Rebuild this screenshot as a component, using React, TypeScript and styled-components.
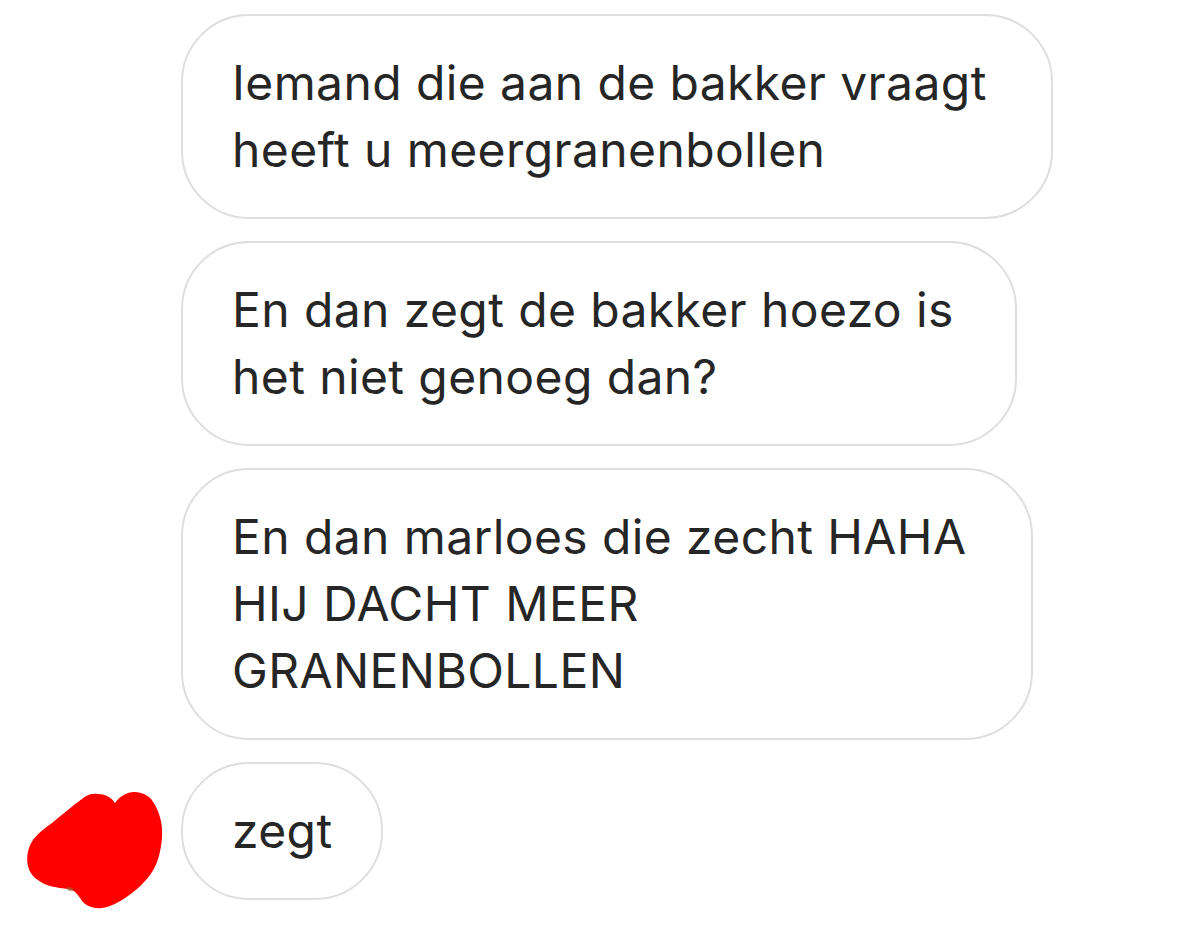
import React from "react";
import styled, { createGlobalStyle } from "styled-components";

const GlobalStyle = createGlobalStyle`
  html, body {
    margin: 0;
    padding: 0;
    background: #ffffff;
  }
  body {
    font-family: Inter, "Noto Sans", "Liberation Sans", sans-serif;
    -webkit-font-smoothing: antialiased;
  }
`;

const Thread = styled.div`
  display: flex;
  flex-direction: column;
  gap: 22px;
  padding-top: 14px;
  width: 1200px;
  height: 927px;
  box-sizing: border-box;
  overflow: hidden;
`;

const Row = styled.div`
  display: flex;
  align-items: flex-end;
`;

const AvatarSlot = styled.div`
  width: 181px;
  flex-shrink: 0;
  align-self: stretch;
  position: relative;
`;

const Scribble = styled.svg`
  position: absolute;
  left: 0;
  bottom: 0;
  overflow: visible;
`;

const Bubble = styled.div<{ $w: number }>`
  box-sizing: border-box;
  width: ${(p) => p.$w}px;
  border: 2px solid #dedede;
  border-radius: 68px;
  padding: 33px 20px 34px 49px;
  font-size: 48px;
  line-height: 67px;
  color: #262626;
  font-weight: 400;
  letter-spacing: 0.4px;
  white-space: nowrap;
`;

const messages: { w: number; lines: string[] }[] = [
  { w: 872, lines: ["Iemand die aan de bakker vraagt", "heeft u meergranenbollen"] },
  { w: 836, lines: ["En dan zegt de bakker hoezo is", "het niet genoeg dan?"] },
  { w: 852, lines: ["En dan marloes die zecht HAHA", "HIJ DACHT MEER", "GRANENBOLLEN"] },
];

function Lines({ lines }: { lines: string[] }) {
  return (
    <>
      {lines.map((l, i) => (
        <React.Fragment key={i}>
          {l}
          {i < lines.length - 1 && <br />}
        </React.Fragment>
      ))}
    </>
  );
}

export default function App() {
  return (
    <>
      <GlobalStyle />
      <Thread>
        {messages.map((m, i) => (
          <Row key={i}>
            <AvatarSlot />
            <Bubble $w={m.w}>
              <Lines lines={m.lines} />
            </Bubble>
          </Row>
        ))}
        <Row>
          <AvatarSlot>
            <Scribble width="181" height="138" viewBox="0 763 181 138">
              <path
                fill="#ff0000"
                d="M82 800 C 86 796, 92 794, 98 795 C 106 795, 112 799, 115 804 C 120 797, 127 793, 134 793 C 144 793, 151 798, 155 806 C 160 815, 163 826, 162 838 C 161 852, 158 864, 152 873 C 145 884, 136 891, 128 897 C 118 904, 110 908, 102 909 C 94 910, 86 907, 82 902 C 79 897, 76 893, 72 891 C 64 889, 55 889, 47 886 C 37 882, 30 876, 28 867 C 26 858, 28 848, 33 841 C 38 834, 45 829, 52 824 C 62 816, 72 807, 82 800 Z"
              />
              <path fill="#8a6a3a" opacity="0.6" d="M66 889 C 68 887, 72 888, 74 891 C 72 893, 68 893, 66 889 Z" />
            </Scribble>
          </AvatarSlot>
          <Bubble $w={202}>zegt</Bubble>
        </Row>
      </Thread>
    </>
  );
}
